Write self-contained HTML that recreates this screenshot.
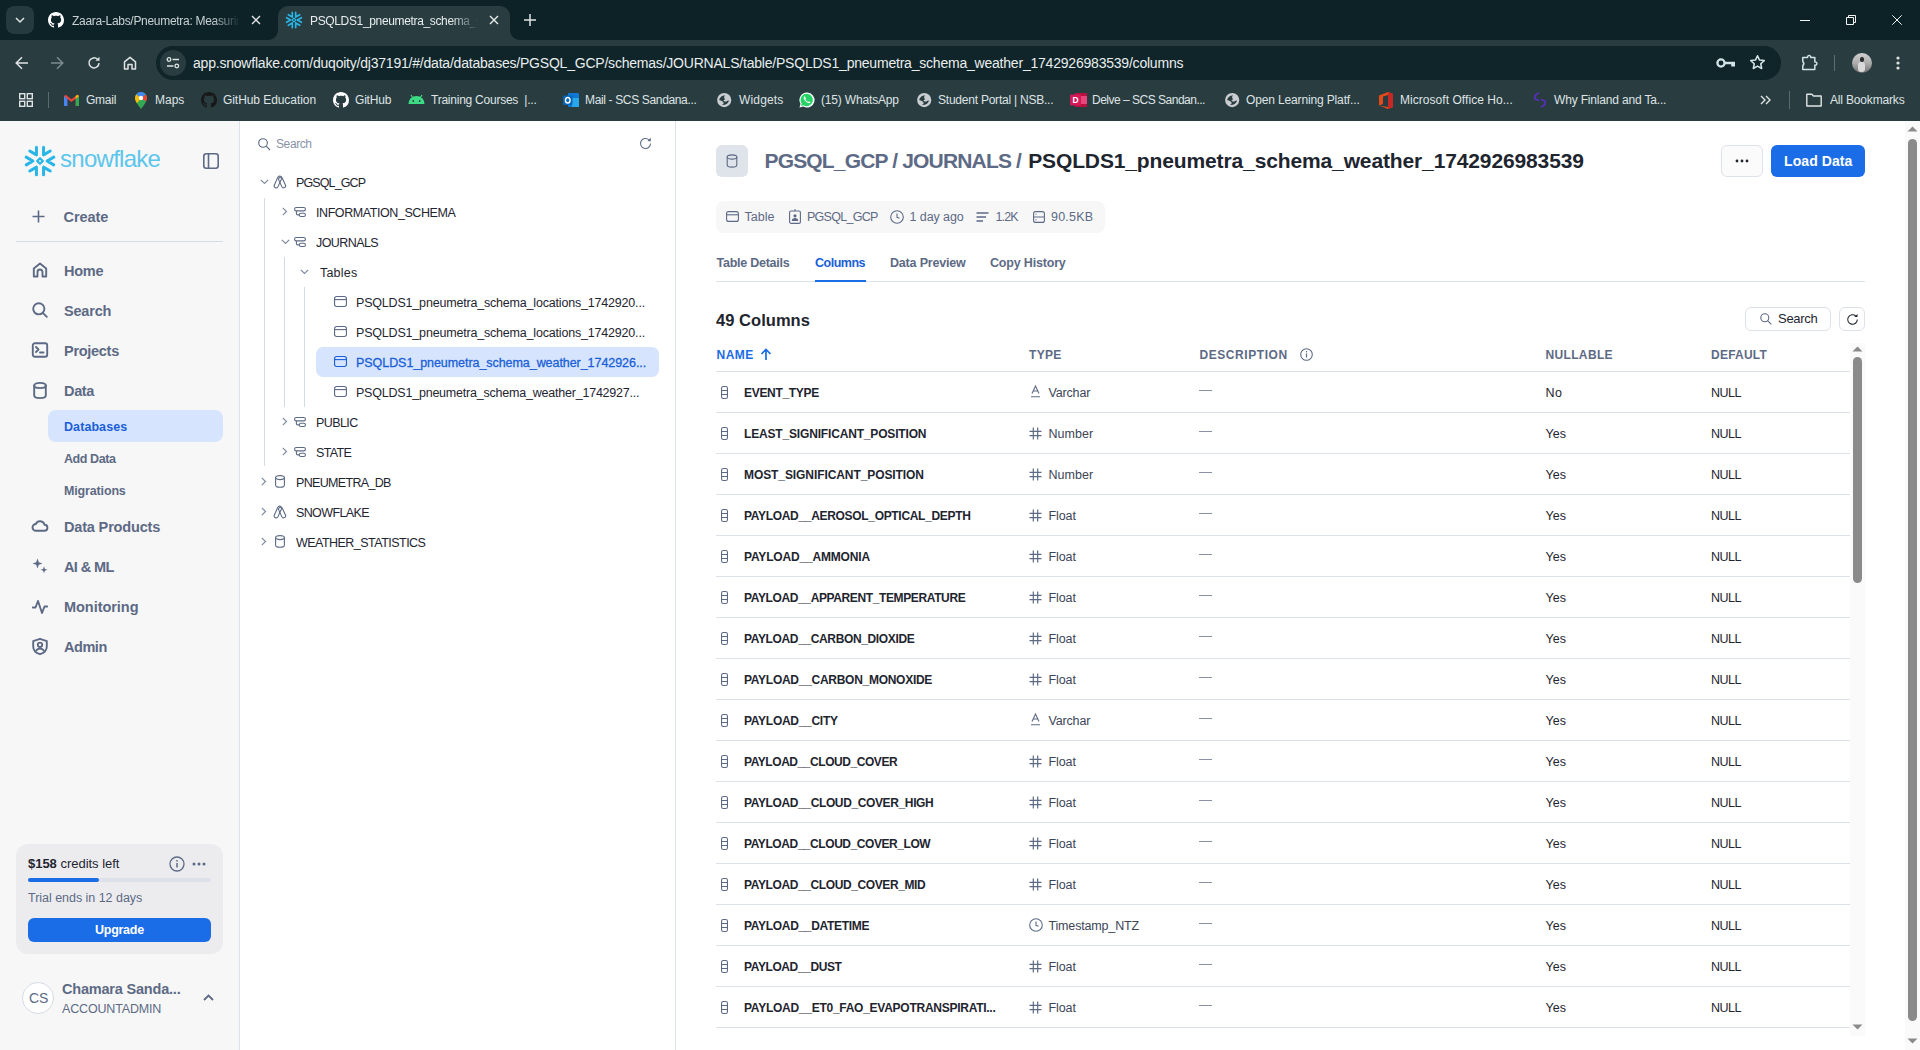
<!DOCTYPE html>
<html><head><meta charset="utf-8">
<style>
*{box-sizing:border-box}
html,body{margin:0;padding:0}
body{width:1920px;height:1050px;overflow:hidden;position:relative;font-family:"Liberation Sans",sans-serif;background:#fff}
.a{position:absolute;white-space:nowrap}
svg{position:absolute;overflow:visible}
</style></head><body>
<div class="a" style="left:0px;top:0px;width:1920px;height:40px;background:#0c2227;border-radius:0px;"></div>
<div class="a" style="left:6px;top:6px;width:28px;height:28px;background:#243a3f;border-radius:8px;"></div>
<svg style="left:14px;top:15px;" width="12" height="10" viewBox="0 0 12 10"><path d="M2 3 L6 7 L10 3" stroke="#dfe3e4" stroke-width="1.5" fill="none"/></svg>
<svg style="left:48px;top:12px;" width="16" height="16" viewBox="0 0 16 16"><path fill="#fff" d="M8 0C3.58 0 0 3.58 0 8c0 3.54 2.29 6.53 5.47 7.59.4.07.55-.17.55-.38 0-.19-.01-.82-.01-1.49-2.01.37-2.530-.49-2.69-.94-.09-.23-.48-.94-.82-1.13-.28-.15-.68-.52-.01-.53.63-.01 1.08.58 1.23.82.72 1.21 1.87.87 2.33.66.07-.52.28-.87.51-1.07-1.780-.2-3.64-.89-3.64-3.95 0-.87.31-1.59.82-2.15-.08-.2-.36-1.02.08-2.12 0 0 .67-.21 2.2.82.64-.18 1.32-.27 2-.27.68 0 1.36.09 2 .27 1.53-1.04 2.2-.82 2.2-.82.44 1.1.16 1.92.08 2.12.51.56.82 1.27.82 2.15 0 3.07-1.87 3.75-3.65 3.95.29.25.54.73.54 1.48 0 1.07-.01 1.930-.01 2.2 0 .21.15.46.55.38A8.013 8.013 0 0016 8c0-4.42-3.58-8-8-8z"/></svg>
<div class="a" style="left:72px;top:13.00px;font-size:12px;line-height:16px;color:#c9d1d3;font-weight:normal;letter-spacing:0.000px;letter-spacing:-0.3px;width:168px;overflow:hidden;-webkit-mask-image:linear-gradient(90deg,#000 84%,transparent 100%)">Zaara-Labs/Pneumetra: Measuring</div>
<svg style="left:251px;top:15px;" width="10" height="10" viewBox="0 0 10 10"><path d="M1 1L9 9M9 1L1 9" stroke="#dfe3e4" stroke-width="1.4"/></svg>
<div class="a" style="left:278px;top:6px;width:232px;height:34px;background:#293d41;border-radius:10px 10px 0 0px;"></div>
<div class="a" style="left:268px;top:30px;width:10px;height:10px;background:radial-gradient(circle at 0 0,#0c2227 9.5px,#293d41 10.5px)"></div>
<div class="a" style="left:510px;top:30px;width:10px;height:10px;background:radial-gradient(circle at 100% 0,#0c2227 9.5px,#293d41 10.5px)"></div>
<svg style="left:286px;top:12px;" width="16" height="16" viewBox="-8 -8 16 16"><path d="M3.40 -0.00L7.38 -2.30M3.40 -0.00L7.38 2.30M1.70 -2.94L1.70 -7.54M1.70 -2.94L5.68 -5.24M-1.70 -2.94L-5.68 -5.24M-1.70 -2.94L-1.70 -7.54M-3.40 -0.00L-7.38 2.30M-3.40 -0.00L-7.38 -2.30M-1.70 2.94L-1.70 7.54M-1.70 2.94L-5.68 5.24M1.70 2.94L5.68 5.24M1.70 2.94L1.70 7.54" stroke="#29b5e8" stroke-width="1.7" stroke-linecap="round" fill="none"/><path d="M0 -1.9L1.9 0L0 1.9L-1.9 0Z" stroke="#29b5e8" stroke-width="1.2" stroke-linejoin="round" fill="none"/></svg>
<div class="a" style="left:310px;top:13.00px;font-size:12px;line-height:16px;color:#e8ecec;font-weight:normal;letter-spacing:0.000px;letter-spacing:-0.35px;width:168px;overflow:hidden;-webkit-mask-image:linear-gradient(90deg,#000 84%,transparent 100%)">PSQLDS1_pneumetra_schema_weather</div>
<svg style="left:489px;top:15px;" width="10" height="10" viewBox="0 0 10 10"><path d="M1 1L9 9M9 1L1 9" stroke="#e8ecec" stroke-width="1.4"/></svg>
<svg style="left:524px;top:14px;" width="12" height="12" viewBox="0 0 12 12"><path d="M6 0V12M0 6H12" stroke="#dfe3e4" stroke-width="1.5"/></svg>
<div class="a" style="left:1800px;top:20px;width:10px;height:1px;background:#f2f4f4;border-radius:0px;"></div>
<svg style="left:1846px;top:15px;" width="10" height="10" viewBox="0 0 10 10"><path d="M0.5 2.5H7.5V9.5H0.5Z M2.5 2.5V0.5H9.5V7.5H7.5" stroke="#f2f4f4" stroke-width="1" fill="none"/></svg>
<svg style="left:1892px;top:15px;" width="10" height="10" viewBox="0 0 10 10"><path d="M0.3 0.3L9.7 9.7M9.7 0.3L0.3 9.7" stroke="#f2f4f4" stroke-width="1"/></svg>
<div class="a" style="left:0px;top:40px;width:1920px;height:81px;background:#293d41;border-radius:0px;"></div>
<svg style="left:15px;top:56px;" width="14" height="14" viewBox="0 0 14 14"><path d="M13 7H1.5M7 1.2L1.2 7L7 12.8" stroke="#dfe3e4" stroke-width="1.5" fill="none"/></svg>
<svg style="left:50px;top:56px;" width="14" height="14" viewBox="0 0 14 14"><path d="M1 7H12.5M7 1.2L12.8 7L7 12.8" stroke="#7d8b8e" stroke-width="1.5" fill="none"/></svg>
<svg style="left:87px;top:56px;" width="14" height="14" viewBox="0 0 14 14"><path d="M12 7A5 5 0 1 1 10.5 3.3" stroke="#dfe3e4" stroke-width="1.5" fill="none"/><path d="M12.5 0.8V4.8H8.5Z" fill="#dfe3e4"/></svg>
<svg style="left:123px;top:56px;" width="14" height="14" viewBox="0 0 14 14"><path d="M1.5 13V5.8L7 1.3L12.5 5.8V13H9V8.5H5V13Z" stroke="#dfe3e4" stroke-width="1.5" fill="none" stroke-linejoin="round"/></svg>
<div class="a" style="left:156px;top:46px;width:1625px;height:34px;background:#0f2529;border-radius:17px;"></div>
<div class="a" style="left:160px;top:50px;width:26px;height:26px;background:#293d41;border-radius:13px;"></div>
<svg style="left:166px;top:56px;" width="14" height="14" viewBox="0 0 14 14"><circle cx="3" cy="3.5" r="1.8" stroke="#dfe3e4" stroke-width="1.3" fill="none"/><path d="M6.5 3.5H13M1 10H7.5" stroke="#dfe3e4" stroke-width="1.3"/><circle cx="10.8" cy="10" r="1.8" stroke="#dfe3e4" stroke-width="1.3" fill="none"/></svg>
<div class="a" id="url" style="left:193px;top:54.00px;font-size:14px;line-height:18px;color:#e9edee;font-weight:normal;letter-spacing:-0.212px;">app.snowflake.com/duqoity/dj37191/#/data/databases/PGSQL_GCP/schemas/JOURNALS/table/PSQLDS1_pneumetra_schema_weather_1742926983539/columns</div>
<svg style="left:1716px;top:56px;" width="20" height="14" viewBox="0 0 20 14"><circle cx="5" cy="7" r="3.6" stroke="#d3e4e6" stroke-width="2.3" fill="none"/><path d="M8.6 5.8H19V8.2H8.6Z M15.2 8H19V10.5H15.2Z" fill="#d3e4e6"/></svg>
<svg style="left:1749px;top:54px;" width="17" height="17" viewBox="0 0 24 24"><path d="M12 2.5L14.9 8.6L21.5 9.3L16.6 13.8L17.9 20.4L12 17.1L6.1 20.4L7.4 13.8L2.5 9.3L9.1 8.6Z" stroke="#d3e4e6" stroke-width="2.2" fill="none" stroke-linejoin="round"/></svg>
<svg style="left:1801px;top:54px;" width="17" height="17" viewBox="0 0 24 24"><path d="M2.5 5H9.3A2.3 2.3 0 1 1 13.7 5H19.5V11.3A2.3 2.3 0 1 1 19.5 15.7V22H2.5V16.5Q5.5 13.5 2.5 10.5Z" stroke="#d3e4e6" stroke-width="2.1" fill="none" stroke-linejoin="round"/></svg>
<div class="a" style="left:1834px;top:55px;width:1px;height:16px;background:#5b6e71;border-radius:0px;"></div>
<div class="a" style="left:1852px;top:53px;width:20px;height:20px;background:linear-gradient(180deg,#d0d0d0 0%,#a9a9a9 55%,#6f6f6f 100%);border-radius:10px;"></div>
<div class="a" style="left:1860px;top:57px;width:4px;height:5px;background:#2a2a2a;border-radius:2px;"></div>
<div class="a" style="left:1858px;top:62px;width:7px;height:10px;background:#d9d9d9;border-radius:3px;"></div>
<svg style="left:1896px;top:56px;" width="4" height="14" viewBox="0 0 4 14"><circle cx="2" cy="2" r="1.6" fill="#dfe3e4"/><circle cx="2" cy="7" r="1.6" fill="#dfe3e4"/><circle cx="2" cy="12" r="1.6" fill="#dfe3e4"/></svg>
<svg style="left:19px;top:93px;" width="14" height="14" viewBox="0 0 14 14"><rect x="0.7" y="0.7" width="5" height="5" stroke="#dfe3e4" stroke-width="1.4" fill="none"/><rect x="0.7" y="8.3" width="5" height="5" stroke="#dfe3e4" stroke-width="1.4" fill="none"/><rect x="8.3" y="0.7" width="5" height="5" stroke="#dfe3e4" stroke-width="1.4" fill="none"/><rect x="8.3" y="8.3" width="5" height="5" stroke="#dfe3e4" stroke-width="1.4" fill="none"/></svg>
<div class="a" style="left:48px;top:92px;width:1px;height:16px;background:#5b6a6d;border-radius:0px;"></div>
<svg style="left:64px;top:94px;" width="15" height="12" viewBox="0 0 15 12"><path d="M0 2V12H3.3V4.8L7.5 8L11.7 4.8V12H15V2L13.3 0.8L7.5 5.2L1.7 0.8Z" fill="#ea4335"/><path d="M0 2V12H3.3V4.8Z" fill="#4285f4"/><path d="M15 2V12H11.7V4.8Z" fill="#34a853"/><path d="M11.7 4.8L15 2L13.3 0.8L11.7 2Z" fill="#fbbc04"/></svg>
<svg style="left:135px;top:92px;" width="12" height="17" viewBox="0 0 12 17"><path d="M6 0A6 6 0 0 0 0 6C0 10 6 17 6 17S12 10 12 6A6 6 0 0 0 6 0Z" fill="#34a853"/><path d="M6 0A6 6 0 0 0 1.2 2.4L6 6 10.8 2.4A6 6 0 0 0 6 0Z" fill="#4285f4"/><path d="M0 6C0 7.5 .8 9.5 2 11.3L6 6 1.2 2.4A6 6 0 0 0 0 6Z" fill="#fbbc04"/><path d="M6 6 10.8 2.4C11.6 3.4 12 4.6 12 6 12 7 11.6 8.2 11 9.5Z" fill="#ea4335"/><circle cx="6" cy="6" r="2.2" fill="#fff"/></svg>
<svg style="left:201px;top:92px;" width="16" height="16" viewBox="0 0 16 16"><path fill="#181818" d="M8 0C3.58 0 0 3.58 0 8c0 3.54 2.29 6.53 5.47 7.59.4.07.55-.17.55-.38 0-.19-.01-.82-.01-1.49-2.01.37-2.530-.49-2.69-.94-.09-.23-.48-.94-.82-1.13-.28-.15-.68-.52-.01-.53.63-.01 1.08.58 1.23.82.72 1.21 1.87.87 2.33.66.07-.52.28-.87.51-1.07-1.780-.2-3.64-.89-3.64-3.95 0-.87.31-1.59.82-2.15-.08-.2-.36-1.02.08-2.12 0 0 .67-.21 2.2.82.64-.18 1.32-.27 2-.27.68 0 1.36.09 2 .27 1.53-1.04 2.2-.82 2.2-.82.44 1.1.16 1.92.08 2.12.51.56.82 1.27.82 2.15 0 3.07-1.87 3.75-3.65 3.95.29.25.54.73.54 1.48 0 1.07-.01 1.930-.01 2.2 0 .21.15.46.55.38A8.013 8.013 0 0016 8c0-4.42-3.58-8-8-8z"/></svg>
<svg style="left:333px;top:92px;" width="16" height="16" viewBox="0 0 16 16"><path fill="#fff" d="M8 0C3.58 0 0 3.58 0 8c0 3.54 2.29 6.53 5.47 7.59.4.07.55-.17.55-.38 0-.19-.01-.82-.01-1.49-2.01.37-2.530-.49-2.69-.94-.09-.23-.48-.94-.82-1.13-.28-.15-.68-.52-.01-.53.63-.01 1.08.58 1.23.82.72 1.21 1.87.87 2.33.66.07-.52.28-.87.51-1.07-1.780-.2-3.64-.89-3.64-3.95 0-.87.31-1.59.82-2.15-.08-.2-.36-1.02.08-2.12 0 0 .67-.21 2.2.82.64-.18 1.32-.27 2-.27.68 0 1.36.09 2 .27 1.53-1.04 2.2-.82 2.2-.82.44 1.1.16 1.92.08 2.12.51.56.82 1.27.82 2.15 0 3.07-1.87 3.75-3.65 3.95.29.25.54.73.54 1.48 0 1.07-.01 1.930-.01 2.2 0 .21.15.46.55.38A8.013 8.013 0 0016 8c0-4.42-3.58-8-8-8z"/></svg>
<svg style="left:408px;top:94px;" width="17" height="10" viewBox="0 0 17 10"><path d="M0.5 10A8 8 0 0 1 16.5 10Z" fill="#3ddc84"/><path d="M3 1L5 4M14 1L12 4" stroke="#3ddc84" stroke-width="1.2"/><circle cx="5.3" cy="7" r="0.9" fill="#293d41"/><circle cx="11.7" cy="7" r="0.9" fill="#293d41"/></svg>
<svg style="left:563px;top:92px;" width="16" height="16" viewBox="0 0 16 16"><rect x="5" y="1" width="11" height="14" rx="1" fill="#0f78d4"/><rect x="9" y="6" width="7" height="9" fill="#28a8ea"/><rect x="0" y="3.5" width="9.5" height="9.5" rx="1" fill="#0364b8"/><ellipse cx="4.75" cy="8.25" rx="2.3" ry="2.8" stroke="#fff" stroke-width="1.4" fill="none"/></svg>
<svg style="left:717px;top:93px;" width="15" height="15" viewBox="0 0 15 15"><circle cx="7.2" cy="7.1" r="7.1" fill="#c9ccd0"/><path d="M2.2 6.9C2.6 4.6 4.8 2.4 8 2.3C7.3 3.4 6.6 4.6 7.6 5.5C8.3 6.2 7.4 7.2 6.1 7.5C7.2 8.4 8.2 8.9 9.2 8.5C10.2 8 11.1 7.6 12 7.5C11.5 10.2 9 12.1 5.2 12C6 11.1 7.1 10.4 6.6 9.5C5.8 8.4 4.2 7.4 2.2 6.9Z" fill="#293d41"/></svg>
<svg style="left:917px;top:93px;" width="15" height="15" viewBox="0 0 15 15"><circle cx="7.2" cy="7.1" r="7.1" fill="#c9ccd0"/><path d="M2.2 6.9C2.6 4.6 4.8 2.4 8 2.3C7.3 3.4 6.6 4.6 7.6 5.5C8.3 6.2 7.4 7.2 6.1 7.5C7.2 8.4 8.2 8.9 9.2 8.5C10.2 8 11.1 7.6 12 7.5C11.5 10.2 9 12.1 5.2 12C6 11.1 7.1 10.4 6.6 9.5C5.8 8.4 4.2 7.4 2.2 6.9Z" fill="#293d41"/></svg>
<svg style="left:1225px;top:93px;" width="15" height="15" viewBox="0 0 15 15"><circle cx="7.2" cy="7.1" r="7.1" fill="#c9ccd0"/><path d="M2.2 6.9C2.6 4.6 4.8 2.4 8 2.3C7.3 3.4 6.6 4.6 7.6 5.5C8.3 6.2 7.4 7.2 6.1 7.5C7.2 8.4 8.2 8.9 9.2 8.5C10.2 8 11.1 7.6 12 7.5C11.5 10.2 9 12.1 5.2 12C6 11.1 7.1 10.4 6.6 9.5C5.8 8.4 4.2 7.4 2.2 6.9Z" fill="#293d41"/></svg>
<svg style="left:799px;top:92px;" width="16" height="16" viewBox="0 0 16 16"><path d="M8 0.5A7.5 7.5 0 0 0 1.5 11.8L0.5 15.5L4.3 14.5A7.5 7.5 0 1 0 8 0.5Z" fill="#fff"/><path d="M8 1.8A6.2 6.2 0 0 0 2.7 11.5L2 14L4.5 13.3A6.2 6.2 0 1 0 8 1.8Z" fill="#25d366"/><path d="M5.5 4.3C5 4.6 4.6 5.3 4.9 6.4 5.4 8.3 7.3 10.6 9.8 11.1 10.7 11.3 11.4 10.8 11.5 10.2L10 9.3 9.3 10C8.3 9.7 6.8 8.3 6.3 7.3L6.9 6.5 6 4.4Z" fill="#fff"/></svg>
<svg style="left:1070px;top:92px;" width="17" height="16" viewBox="0 0 17 16"><rect x="5" y="1" width="12" height="14" fill="#b9113d"/><rect x="11" y="4" width="6" height="8" fill="#e8467c"/><rect x="0" y="2.5" width="11" height="11" rx="1" fill="#d3195a"/><text x="5.5" y="11.3" font-size="8.5" font-weight="bold" fill="#fff" text-anchor="middle" font-family="Liberation Sans">D</text></svg>
<svg style="left:1379px;top:92px;" width="14" height="17" viewBox="0 0 14 17"><path d="M0 3.5L9 0L14 2V15L9 17L0 13.5L9 15V3L4 4.5V12L0 13.5Z" fill="#e64a19"/><path d="M9 0L14 2V15L9 17Z" fill="#c62828"/></svg>
<svg style="left:1533px;top:92px;" width="14" height="16" viewBox="0 0 14 16"><path d="M6 1C3 2 1 4 2 7L6 8.5M8 15C11 14 13 12 12 9L8 7.5" stroke="#5a2fc2" stroke-width="1.6" fill="none"/></svg>
<svg style="left:1760px;top:95px;" width="11" height="10" viewBox="0 0 11 10"><path d="M1 1L5 5L1 9M6 1L10 5L6 9" stroke="#dfe3e4" stroke-width="1.4" fill="none"/></svg>
<div class="a" style="left:1789px;top:91px;width:1px;height:18px;background:#5b6a6d;border-radius:0px;"></div>
<svg style="left:1806px;top:93px;" width="16" height="14" viewBox="0 0 16 14"><path d="M0.8 1.2H5.8L7.5 3H15.2V13H0.8Z" stroke="#dfe3e4" stroke-width="1.4" fill="none" stroke-linejoin="round"/></svg>
<div class="a" id="bm86" style="left:86px;top:92.00px;font-size:12px;line-height:16px;color:#dfe3e4;font-weight:normal;letter-spacing:-0.250px;">Gmail</div>
<div class="a" id="bm155" style="left:155px;top:92.00px;font-size:12px;line-height:16px;color:#dfe3e4;font-weight:normal;letter-spacing:0.000px;">Maps</div>
<div class="a" id="bm223" style="left:223px;top:92.00px;font-size:12px;line-height:16px;color:#dfe3e4;font-weight:normal;letter-spacing:-0.067px;">GitHub Education</div>
<div class="a" id="bm355" style="left:355px;top:92.00px;font-size:12px;line-height:16px;color:#dfe3e4;font-weight:normal;letter-spacing:-0.200px;">GitHub</div>
<div class="a" id="bm431" style="left:431px;top:92.00px;font-size:12px;line-height:16px;color:#dfe3e4;font-weight:normal;letter-spacing:-0.238px;">Training Courses  |...</div>
<div class="a" id="bm585" style="left:585px;top:92.00px;font-size:12px;line-height:16px;color:#dfe3e4;font-weight:normal;letter-spacing:-0.350px;">Mail - SCS Sandana...</div>
<div class="a" id="bm739" style="left:739px;top:92.00px;font-size:12px;line-height:16px;color:#dfe3e4;font-weight:normal;letter-spacing:0.167px;">Widgets</div>
<div class="a" id="bm821" style="left:821px;top:92.00px;font-size:12px;line-height:16px;color:#dfe3e4;font-weight:normal;letter-spacing:-0.167px;">(15) WhatsApp</div>
<div class="a" id="bm938" style="left:938px;top:92.00px;font-size:12px;line-height:16px;color:#dfe3e4;font-weight:normal;letter-spacing:-0.227px;">Student Portal | NSB...</div>
<div class="a" id="bm1092" style="left:1092px;top:92.00px;font-size:12px;line-height:16px;color:#dfe3e4;font-weight:normal;letter-spacing:-0.500px;">Delve – SCS Sandan...</div>
<div class="a" id="bm1246" style="left:1246px;top:92.00px;font-size:12px;line-height:16px;color:#dfe3e4;font-weight:normal;letter-spacing:-0.143px;">Open Learning Platf...</div>
<div class="a" id="bm1400" style="left:1400px;top:92.00px;font-size:12px;line-height:16px;color:#dfe3e4;font-weight:normal;letter-spacing:0.048px;">Microsoft Office Ho...</div>
<div class="a" id="bm1554" style="left:1554px;top:92.00px;font-size:12px;line-height:16px;color:#dfe3e4;font-weight:normal;letter-spacing:-0.170px;">Why Finland and Ta...</div>
<div class="a" id="bm1830" style="left:1830px;top:92.00px;font-size:12px;line-height:16px;color:#dfe3e4;font-weight:normal;letter-spacing:-0.167px;">All Bookmarks</div>
<div class="a" style="left:0px;top:121px;width:240px;height:929px;background:#f7f7f7;border-radius:0px;"></div>
<div class="a" style="left:239px;top:121px;width:1px;height:929px;background:#dde1ea;border-radius:0px;"></div>
<svg style="left:40px;top:161px;" width="1" height="1" viewBox="0 0 1 1"><path d="M7.10 -0.00L13.77 -3.85M7.10 -0.00L13.77 3.85M3.55 -6.15L3.55 -13.85M3.55 -6.15L10.22 -10.00M-3.55 -6.15L-10.22 -10.00M-3.55 -6.15L-3.55 -13.85M-7.10 -0.00L-13.77 3.85M-7.10 -0.00L-13.77 -3.85M-3.55 6.15L-3.55 13.85M-3.55 6.15L-10.22 10.00M3.55 6.15L10.22 10.00M3.55 6.15L3.55 13.85" stroke="#29b5e8" stroke-width="3.0" stroke-linecap="round" fill="none"/><path d="M0 -2.8L2.8 0L0 2.8L-2.8 0Z" stroke="#29b5e8" stroke-width="2.3" stroke-linejoin="round" fill="none"/></svg>
<div class="a" id="logo" style="left:60px;top:145.00px;font-size:24px;line-height:28px;color:#5cc5ec;font-weight:normal;letter-spacing:-0.725px;">snowflake</div>
<svg style="left:203px;top:153px;" width="16" height="16" viewBox="0 0 16 16"><rect x="0.8" y="0.8" width="14.4" height="14.4" rx="2.5" stroke="#5d6a85" stroke-width="1.6" fill="none"/><path d="M5.5 1V15" stroke="#5d6a85" stroke-width="1.6"/></svg>
<svg style="left:32px;top:210px;" width="13" height="13" viewBox="0 0 13 13"><path d="M6.5 0.5V12.5M0.5 6.5H12.5" stroke="#5d6a85" stroke-width="1.6"/></svg>
<div class="a" id="nav217" style="left:63.5px;top:208.00px;font-size:14.5px;line-height:18px;color:#5d6a85;font-weight:bold;letter-spacing:-0.040px;">Create</div>
<div class="a" id="nav271" style="left:64px;top:262.00px;font-size:14.5px;line-height:18px;color:#5d6a85;font-weight:bold;letter-spacing:-0.268px;">Home</div>
<div class="a" id="nav311" style="left:64px;top:302.00px;font-size:14.5px;line-height:18px;color:#5d6a85;font-weight:bold;letter-spacing:-0.200px;">Search</div>
<div class="a" id="nav351" style="left:64px;top:342.00px;font-size:14.5px;line-height:18px;color:#5d6a85;font-weight:bold;letter-spacing:-0.286px;">Projects</div>
<div class="a" id="nav391" style="left:64px;top:382.00px;font-size:14.5px;line-height:18px;color:#5d6a85;font-weight:bold;letter-spacing:-0.333px;">Data</div>
<div class="a" id="nav527" style="left:64px;top:518.00px;font-size:14.5px;line-height:18px;color:#5d6a85;font-weight:bold;letter-spacing:-0.167px;">Data Products</div>
<div class="a" id="nav567" style="left:64px;top:558.00px;font-size:14.5px;line-height:18px;color:#5d6a85;font-weight:bold;letter-spacing:-0.600px;">AI &amp; ML</div>
<div class="a" id="nav607" style="left:64px;top:598.00px;font-size:14.5px;line-height:18px;color:#5d6a85;font-weight:bold;letter-spacing:-0.042px;">Monitoring</div>
<div class="a" id="nav647" style="left:64px;top:638.00px;font-size:14.5px;line-height:18px;color:#5d6a85;font-weight:bold;letter-spacing:-0.450px;">Admin</div>
<div class="a" style="left:16px;top:241px;width:207px;height:1px;background:#d5dbe6;border-radius:0px;"></div>
<svg style="left:32px;top:262px;" width="16" height="16" viewBox="0 0 16 16"><path d="M1.8 14.5V6.5L8 1.5L14.2 6.5V14.5H10.5V10A2.5 2.5 0 0 0 5.5 10V14.5Z" stroke="#5d6a85" fill="none" stroke-width="1.9" stroke-linecap="round" stroke-linejoin="round"/></svg>
<svg style="left:32px;top:302px;" width="16" height="16" viewBox="0 0 16 16"><circle cx="6.8" cy="6.8" r="5.6" stroke="#5d6a85" fill="none" stroke-width="1.9" stroke-linecap="round" stroke-linejoin="round"/><path d="M10.8 10.8L14.8 14.8" stroke="#5d6a85" fill="none" stroke-width="1.9" stroke-linecap="round" stroke-linejoin="round"/></svg>
<svg style="left:32px;top:342px;" width="16" height="16" viewBox="0 0 16 16"><rect x="0.8" y="1.3" width="14.4" height="13.4" rx="2" stroke="#5d6a85" fill="none" stroke-width="1.9" stroke-linecap="round" stroke-linejoin="round"/><path d="M4 5L6.5 7.5L4 10M8 10.5H11.5" stroke="#5d6a85" fill="none" stroke-width="1.9" stroke-linecap="round" stroke-linejoin="round"/></svg>
<svg style="left:33px;top:382px;" width="14" height="17" viewBox="0 0 14 17"><ellipse cx="7" cy="3.5" rx="5.8" ry="2.6" stroke="#5d6a85" fill="none" stroke-width="1.9" stroke-linecap="round" stroke-linejoin="round"/><path d="M1.2 3.5V13.5A5.8 2.6 0 0 0 12.8 13.5V3.5" stroke="#5d6a85" fill="none" stroke-width="1.9" stroke-linecap="round" stroke-linejoin="round"/></svg>
<div class="a" style="left:48px;top:410px;width:175px;height:32px;background:#d6e5fd;border-radius:8px;"></div>
<div class="a" id="sub1" style="left:64px;top:418.50px;font-size:12.5px;line-height:16px;color:#1a5fd8;font-weight:bold;letter-spacing:0.079px;">Databases</div>
<div class="a" id="sub2" style="left:64px;top:450.50px;font-size:12.5px;line-height:16px;color:#5d6a85;font-weight:bold;letter-spacing:-0.429px;">Add Data</div>
<div class="a" id="sub3" style="left:64px;top:482.50px;font-size:12.5px;line-height:16px;color:#5d6a85;font-weight:bold;letter-spacing:-0.153px;">Migrations</div>
<svg style="left:32px;top:519px;" width="16" height="13" viewBox="0 0 16 13"><path d="M4 11.8H12.3A3 3 0 0 0 12.5 5.8A4.6 4.6 0 0 0 3.8 5A3.4 3.4 0 0 0 4 11.8Z" stroke="#5d6a85" fill="none" stroke-width="1.9" stroke-linecap="round" stroke-linejoin="round"/></svg>
<svg style="left:32px;top:558px;" width="16" height="16" viewBox="0 0 16 16"><path d="M5.5 0.5L6.8 4.2L10.5 5.5L6.8 6.8L5.5 10.5L4.2 6.8L0.5 5.5L4.2 4.2Z" fill="#5d6a85"/><path d="M12 8.3L12.9 10.9L15.5 11.8L12.9 12.7L12 15.3L11.1 12.7L8.5 11.8L11.1 10.9Z" fill="#5d6a85"/></svg>
<svg style="left:32px;top:599px;" width="16" height="16" viewBox="0 0 16 16"><path d="M0.8 8.5H3.5L6 2L10 14L12.5 7.5H15.2" stroke="#5d6a85" fill="none" stroke-width="1.9" stroke-linecap="round" stroke-linejoin="round"/></svg>
<svg style="left:32px;top:638px;" width="16" height="17" viewBox="0 0 16 17"><path d="M8 0.8L14.8 3.2V8.5C14.8 12.3 11.8 15 8 16.2C4.2 15 1.2 12.3 1.2 8.5V3.2Z" stroke="#5d6a85" fill="none" stroke-width="1.9" stroke-linecap="round" stroke-linejoin="round"/><circle cx="8" cy="6.8" r="2.2" stroke="#5d6a85" fill="none" stroke-width="1.9" stroke-linecap="round" stroke-linejoin="round"/><path d="M4.2 12.6A4.5 4.5 0 0 1 11.8 12.6" stroke="#5d6a85" fill="none" stroke-width="1.9" stroke-linecap="round" stroke-linejoin="round"/></svg>
<div class="a" style="left:16px;top:844px;width:207px;height:110px;background:#ececef;border-radius:12px;"></div>
<div class="a" id="cred" style="left:28px;top:855.50px;font-size:13px;line-height:16px;color:#1e252f;font-weight:normal;letter-spacing:-0.022px;"><b>$158</b> credits left</div>
<svg style="left:169px;top:856px;" width="16" height="16" viewBox="0 0 16 16"><circle cx="8" cy="8" r="7" stroke="#5d6a85" stroke-width="1.3" fill="none"/><path d="M8 7V11.5" stroke="#5d6a85" stroke-width="1.5"/><circle cx="8" cy="4.8" r="0.9" fill="#5d6a85"/></svg>
<svg style="left:192px;top:862px;" width="14" height="4" viewBox="0 0 14 4"><circle cx="2" cy="2" r="1.5" fill="#5d6a85"/><circle cx="7" cy="2" r="1.5" fill="#5d6a85"/><circle cx="12" cy="2" r="1.5" fill="#5d6a85"/></svg>
<div class="a" style="left:28px;top:878px;width:183px;height:4px;background:#dde1e9;border-radius:2px;"></div>
<div class="a" style="left:28px;top:878px;width:71px;height:4px;background:#1a6ce7;border-radius:2px;"></div>
<div class="a" id="trial" style="left:28px;top:889.50px;font-size:12.5px;line-height:16px;color:#5d6a85;font-weight:normal;letter-spacing:-0.030px;">Trial ends in 12 days</div>
<div class="a" style="left:28px;top:918px;width:183px;height:24px;background:#1a6ce7;border-radius:6px;"></div>
<div class="a" id="upg" style="left:95px;top:922.00px;font-size:12.5px;line-height:16px;color:#fff;font-weight:bold;letter-spacing:-0.266px;">Upgrade</div>
<div class="a" style="left:22px;top:982px;width:32px;height:32px;border-radius:16px;background:#fff;border:1px solid #d5dbe6"></div>
<div class="a" id="cs" style="left:29px;top:990.00px;font-size:14px;line-height:16px;color:#5d6a85;font-weight:normal;letter-spacing:0.000px;">CS</div>
<div class="a" id="cham" style="left:62px;top:980.50px;font-size:14.5px;line-height:17px;color:#5d6a85;font-weight:bold;letter-spacing:-0.200px;">Chamara Sanda...</div>
<div class="a" id="acct" style="left:62px;top:1002.00px;font-size:12.5px;line-height:15px;color:#5d6a85;font-weight:normal;letter-spacing:-0.166px;">ACCOUNTADMIN</div>
<svg style="left:203px;top:994px;" width="11" height="7" viewBox="0 0 11 7"><path d="M1 6L5.5 1.5L10 6" stroke="#5d6a85" stroke-width="1.8" fill="none"/></svg>
<div class="a" style="left:675px;top:121px;width:1px;height:929px;background:#dde1ea;border-radius:0px;"></div>
<svg style="left:258px;top:138px;" width="13" height="13" viewBox="0 0 13 13"><circle cx="5" cy="5" r="4.3" stroke="#5d6a85" stroke-width="1.1" fill="none"/><path d="M8.2 8.2L12 12" stroke="#5d6a85" stroke-width="1.1"/></svg>
<div class="a" id="tsearch" style="left:276px;top:136.00px;font-size:12px;line-height:16px;color:#8a93a6;font-weight:normal;letter-spacing:-0.400px;">Search</div>
<svg style="left:639px;top:137px;" width="13" height="13" viewBox="0 0 13 13"><path d="M11.5 6.5A5 5 0 1 1 10 2.9" stroke="#5d6a85" stroke-width="1.1" fill="none"/><path d="M11.8 0.8V4.2H8.4Z" fill="#5d6a85"/></svg>
<div class="a" style="left:264px;top:198px;width:1px;height:268px;background:#d5dbe6;border-radius:0px;"></div>
<div class="a" style="left:284px;top:257px;width:1px;height:150px;background:#d5dbe6;border-radius:0px;"></div>
<div class="a" style="left:304px;top:287px;width:1px;height:120px;background:#d5dbe6;border-radius:0px;"></div>
<svg style="left:260px;top:179px;" width="9" height="6" viewBox="0 0 9 6"><path d="M0.8 0.8L4.5 4.5L8.2 0.8" stroke="#7f8aa1" stroke-width="1.2" fill="none"/></svg>
<svg style="left:273px;top:176px;" width="14" height="13" viewBox="0 0 14 13"><path d="M5.03 10.62L8.43 3.02A2.0 2.0 0 0 0 4.77 1.38L1.37 8.98A2.0 2.0 0 0 0 5.03 10.62Z" stroke="#5d6a85" stroke-width="1.1" fill="none"/><path d="M5.78 4.14L8.78 10.64A2.0 2.0 0 0 0 12.42 8.96L9.42 2.46A2.0 2.0 0 0 0 5.78 4.14Z" stroke="#5d6a85" stroke-width="1.1" fill="none"/></svg>
<div class="a" id="tree0" style="left:296px;top:174.80px;font-size:12.5px;line-height:16px;color:#1e252f;font-weight:normal;letter-spacing:-0.875px;">PGSQL_GCP</div>
<svg style="left:281.5px;top:207px;" width="6" height="9" viewBox="0 0 6 9"><path d="M0.8 0.8L4.5 4.5L0.8 8.2" stroke="#7f8aa1" stroke-width="1.2" fill="none"/></svg>
<svg style="left:294px;top:207px;" width="12" height="10" viewBox="0 0 12 10"><rect x="0.55" y="0.55" width="10.9" height="3.3" rx="1.65" stroke="#5d6a85" stroke-width="1.1" fill="none"/><path d="M2.4 3.9V6.5Q2.4 7.9 3.7 7.9H5.3" stroke="#5d6a85" stroke-width="1.1" fill="none"/><rect x="5.3" y="6.3" width="6.15" height="3.2" rx="1.6" stroke="#5d6a85" stroke-width="1.1" fill="none"/></svg>
<div class="a" id="tree1" style="left:316px;top:204.80px;font-size:12.5px;line-height:16px;color:#1e252f;font-weight:normal;letter-spacing:-0.426px;">INFORMATION_SCHEMA</div>
<svg style="left:281px;top:239px;" width="9" height="6" viewBox="0 0 9 6"><path d="M0.8 0.8L4.5 4.5L8.2 0.8" stroke="#7f8aa1" stroke-width="1.2" fill="none"/></svg>
<svg style="left:294px;top:237px;" width="12" height="10" viewBox="0 0 12 10"><rect x="0.55" y="0.55" width="10.9" height="3.3" rx="1.65" stroke="#5d6a85" stroke-width="1.1" fill="none"/><path d="M2.4 3.9V6.5Q2.4 7.9 3.7 7.9H5.3" stroke="#5d6a85" stroke-width="1.1" fill="none"/><rect x="5.3" y="6.3" width="6.15" height="3.2" rx="1.6" stroke="#5d6a85" stroke-width="1.1" fill="none"/></svg>
<div class="a" id="tree2" style="left:316px;top:235.30px;font-size:12.5px;line-height:16px;color:#1e252f;font-weight:normal;letter-spacing:-0.571px;">JOURNALS</div>
<svg style="left:300px;top:269px;" width="9" height="6" viewBox="0 0 9 6"><path d="M0.8 0.8L4.5 4.5L8.2 0.8" stroke="#7f8aa1" stroke-width="1.2" fill="none"/></svg>
<div class="a" id="tree3" style="left:320px;top:265.30px;font-size:12.5px;line-height:16px;color:#1e252f;font-weight:normal;letter-spacing:0.200px;">Tables</div>
<svg style="left:334px;top:296px;" width="13" height="11" viewBox="0 0 13 11"><rect x="0.55" y="0.55" width="11.9" height="9.9" rx="2.2" stroke="#5d6a85" stroke-width="1.1" fill="none"/><path d="M0.6 3.6H12.4" stroke="#5d6a85" stroke-width="1.1"/></svg>
<div class="a" id="tree4" style="left:356px;top:295.30px;font-size:12.5px;line-height:16px;color:#1e252f;font-weight:normal;letter-spacing:-0.188px;">PSQLDS1_pneumetra_schema_locations_1742920...</div>
<svg style="left:334px;top:326px;" width="13" height="11" viewBox="0 0 13 11"><rect x="0.55" y="0.55" width="11.9" height="9.9" rx="2.2" stroke="#5d6a85" stroke-width="1.1" fill="none"/><path d="M0.6 3.6H12.4" stroke="#5d6a85" stroke-width="1.1"/></svg>
<div class="a" id="tree5" style="left:356px;top:325.30px;font-size:12.5px;line-height:16px;color:#1e252f;font-weight:normal;letter-spacing:-0.188px;">PSQLDS1_pneumetra_schema_locations_1742920...</div>
<div class="a" style="left:316px;top:347px;width:343px;height:30px;background:#d6e5fd;border-radius:7px;"></div>
<svg style="left:334px;top:356px;" width="13" height="11" viewBox="0 0 13 11"><rect x="0.55" y="0.55" width="11.9" height="9.9" rx="2.2" stroke="#1a5fd8" stroke-width="1.1" fill="none"/><path d="M0.6 3.6H12.4" stroke="#1a5fd8" stroke-width="1.1"/></svg>
<div class="a" id="tree6" style="left:356px;top:355.30px;font-size:12.5px;line-height:16px;color:#1a5fd8;font-weight:normal;letter-spacing:-0.056px;-webkit-text-stroke:0.3px #1a5fd8;">PSQLDS1_pneumetra_schema_weather_1742926...</div>
<svg style="left:334px;top:386px;" width="13" height="11" viewBox="0 0 13 11"><rect x="0.55" y="0.55" width="11.9" height="9.9" rx="2.2" stroke="#5d6a85" stroke-width="1.1" fill="none"/><path d="M0.6 3.6H12.4" stroke="#5d6a85" stroke-width="1.1"/></svg>
<div class="a" id="tree7" style="left:356px;top:385.30px;font-size:12.5px;line-height:16px;color:#1e252f;font-weight:normal;letter-spacing:-0.214px;">PSQLDS1_pneumetra_schema_weather_1742927...</div>
<svg style="left:281.5px;top:417px;" width="6" height="9" viewBox="0 0 6 9"><path d="M0.8 0.8L4.5 4.5L0.8 8.2" stroke="#7f8aa1" stroke-width="1.2" fill="none"/></svg>
<svg style="left:294px;top:417px;" width="12" height="10" viewBox="0 0 12 10"><rect x="0.55" y="0.55" width="10.9" height="3.3" rx="1.65" stroke="#5d6a85" stroke-width="1.1" fill="none"/><path d="M2.4 3.9V6.5Q2.4 7.9 3.7 7.9H5.3" stroke="#5d6a85" stroke-width="1.1" fill="none"/><rect x="5.3" y="6.3" width="6.15" height="3.2" rx="1.6" stroke="#5d6a85" stroke-width="1.1" fill="none"/></svg>
<div class="a" id="tree8" style="left:316px;top:415.30px;font-size:12.5px;line-height:16px;color:#1e252f;font-weight:normal;letter-spacing:-0.600px;">PUBLIC</div>
<svg style="left:281.5px;top:447px;" width="6" height="9" viewBox="0 0 6 9"><path d="M0.8 0.8L4.5 4.5L0.8 8.2" stroke="#7f8aa1" stroke-width="1.2" fill="none"/></svg>
<svg style="left:294px;top:447px;" width="12" height="10" viewBox="0 0 12 10"><rect x="0.55" y="0.55" width="10.9" height="3.3" rx="1.65" stroke="#5d6a85" stroke-width="1.1" fill="none"/><path d="M2.4 3.9V6.5Q2.4 7.9 3.7 7.9H5.3" stroke="#5d6a85" stroke-width="1.1" fill="none"/><rect x="5.3" y="6.3" width="6.15" height="3.2" rx="1.6" stroke="#5d6a85" stroke-width="1.1" fill="none"/></svg>
<div class="a" id="tree9" style="left:316px;top:445.30px;font-size:12.5px;line-height:16px;color:#1e252f;font-weight:normal;letter-spacing:-0.650px;">STATE</div>
<svg style="left:260.5px;top:477px;" width="6" height="9" viewBox="0 0 6 9"><path d="M0.8 0.8L4.5 4.5L0.8 8.2" stroke="#7f8aa1" stroke-width="1.2" fill="none"/></svg>
<svg style="left:275px;top:475px;" width="10" height="13" viewBox="0 0 10 13"><ellipse cx="5" cy="2.6" rx="4.4" ry="2" stroke="#5d6a85" stroke-width="1.1" fill="none"/><path d="M0.6 2.6V10.2A4.4 2 0 0 0 9.4 10.2V2.6" stroke="#5d6a85" stroke-width="1.1" fill="none"/></svg>
<div class="a" id="tree10" style="left:296px;top:475.30px;font-size:12.5px;line-height:16px;color:#1e252f;font-weight:normal;letter-spacing:-0.671px;">PNEUMETRA_DB</div>
<svg style="left:260.5px;top:507px;" width="6" height="9" viewBox="0 0 6 9"><path d="M0.8 0.8L4.5 4.5L0.8 8.2" stroke="#7f8aa1" stroke-width="1.2" fill="none"/></svg>
<svg style="left:273px;top:506px;" width="14" height="13" viewBox="0 0 14 13"><path d="M5.03 10.62L8.43 3.02A2.0 2.0 0 0 0 4.77 1.38L1.37 8.98A2.0 2.0 0 0 0 5.03 10.62Z" stroke="#5d6a85" stroke-width="1.1" fill="none"/><path d="M5.78 4.14L8.78 10.64A2.0 2.0 0 0 0 12.42 8.96L9.42 2.46A2.0 2.0 0 0 0 5.78 4.14Z" stroke="#5d6a85" stroke-width="1.1" fill="none"/></svg>
<div class="a" id="tree11" style="left:296px;top:505.30px;font-size:12.5px;line-height:16px;color:#1e252f;font-weight:normal;letter-spacing:-0.625px;">SNOWFLAKE</div>
<svg style="left:260.5px;top:537px;" width="6" height="9" viewBox="0 0 6 9"><path d="M0.8 0.8L4.5 4.5L0.8 8.2" stroke="#7f8aa1" stroke-width="1.2" fill="none"/></svg>
<svg style="left:275px;top:535px;" width="10" height="13" viewBox="0 0 10 13"><ellipse cx="5" cy="2.6" rx="4.4" ry="2" stroke="#5d6a85" stroke-width="1.1" fill="none"/><path d="M0.6 2.6V10.2A4.4 2 0 0 0 9.4 10.2V2.6" stroke="#5d6a85" stroke-width="1.1" fill="none"/></svg>
<div class="a" id="tree12" style="left:296px;top:535.30px;font-size:12.5px;line-height:16px;color:#1e252f;font-weight:normal;letter-spacing:-0.529px;">WEATHER_STATISTICS</div>
<div class="a" style="left:716px;top:145px;width:32px;height:32px;background:#dfe3ea;border-radius:6px;"></div>
<svg style="left:726px;top:154px;" width="12" height="14" viewBox="0 0 12 14"><ellipse cx="6" cy="3" rx="4.8" ry="2.1" stroke="#5d6a85" stroke-width="1.1" fill="none"/><path d="M1.2 3V11A4.8 2.1 0 0 0 10.8 11V3" stroke="#5d6a85" stroke-width="1.1" fill="none"/></svg>
<div class="a" id="title1" style="left:764.5px;top:148.50px;font-size:21px;line-height:24px;color:#5d6a85;font-weight:bold;letter-spacing:-0.838px;">PGSQL_GCP / JOURNALS /</div>
<div class="a" id="title2" style="left:1028.2px;top:148.50px;font-size:21px;line-height:24px;color:#1e252f;font-weight:bold;letter-spacing:-0.128px;">PSQLDS1_pneumetra_schema_weather_1742926983539</div>
<div class="a" style="left:1721px;top:145px;width:42px;height:32px;border-radius:6px;border:1px solid #dde1e8;background:#fbfbfc"></div>
<svg style="left:1735px;top:159px;" width="14" height="4" viewBox="0 0 14 4"><circle cx="2" cy="2" r="1.4" fill="#1e252f"/><circle cx="7" cy="2" r="1.4" fill="#1e252f"/><circle cx="12" cy="2" r="1.4" fill="#1e252f"/></svg>
<div class="a" style="left:1771px;top:145px;width:94px;height:32px;background:#1a6ce7;border-radius:6px;"></div>
<div class="a" id="load" style="left:1784px;top:152.00px;font-size:14px;line-height:18px;color:#fff;font-weight:bold;letter-spacing:0.079px;">Load Data</div>
<div class="a" style="left:716px;top:201px;width:389px;height:32px;background:#f7f7f8;border-radius:8px;"></div>
<svg style="left:726px;top:211px;" width="13" height="11" viewBox="0 0 13 11"><rect x="0.6" y="0.6" width="11.8" height="9.8" rx="2" stroke="#5d6a85" stroke-width="1.1" fill="none"/><path d="M0.6 3.8H12.4" stroke="#5d6a85" stroke-width="1.1"/></svg>
<svg style="left:789px;top:209px;" width="12" height="15" viewBox="0 0 12 15"><rect x="0.6" y="2" width="10.8" height="12.4" rx="1.5" stroke="#5d6a85" stroke-width="1.1" fill="none"/><path d="M6 0.3V2" stroke="#5d6a85" stroke-width="1.2"/><circle cx="6" cy="6.8" r="1.6" fill="#5d6a85"/><path d="M2.8 12A3.2 3 0 0 1 9.2 12Z" fill="#5d6a85"/></svg>
<svg style="left:890px;top:210px;" width="14" height="14" viewBox="0 0 14 14"><circle cx="7" cy="7" r="6.3" stroke="#5d6a85" stroke-width="1.1" fill="none"/><path d="M7 3.5V7.3L9.5 8.3" stroke="#5d6a85" stroke-width="1.1" fill="none"/></svg>
<svg style="left:976px;top:212px;" width="13" height="10" viewBox="0 0 13 10"><path d="M0.5 1H12.5M0.5 5H10M0.5 9H7" stroke="#5d6a85" stroke-width="1.6"/></svg>
<svg style="left:1033px;top:211px;" width="12" height="12" viewBox="0 0 12 12"><rect x="0.6" y="0.6" width="10.8" height="10.8" rx="2" stroke="#5d6a85" stroke-width="1.1" fill="none"/><path d="M0.6 6H11.4M2.5 3.3H3.5M2.5 8.7H3.5" stroke="#5d6a85" stroke-width="1.1"/></svg>
<div class="a" id="meta744" style="left:744.5px;top:208.70px;font-size:12.5px;line-height:16px;color:#5d6a85;font-weight:normal;letter-spacing:0.000px;">Table</div>
<div class="a" id="meta807" style="left:807px;top:208.70px;font-size:12.5px;line-height:16px;color:#5d6a85;font-weight:normal;letter-spacing:-0.721px;">PGSQL_GCP</div>
<div class="a" id="meta909" style="left:909.5px;top:208.70px;font-size:12.5px;line-height:16px;color:#5d6a85;font-weight:normal;letter-spacing:-0.079px;">1 day ago</div>
<div class="a" id="meta995" style="left:995.5px;top:208.70px;font-size:12.5px;line-height:16px;color:#5d6a85;font-weight:normal;letter-spacing:-0.868px;">1.2K</div>
<div class="a" id="meta1051" style="left:1051px;top:208.70px;font-size:12.5px;line-height:16px;color:#5d6a85;font-weight:normal;letter-spacing:0.200px;">90.5KB</div>
<div class="a" id="tab716" style="left:716.5px;top:254.50px;font-size:12.5px;line-height:16px;color:#5d6a85;font-weight:bold;letter-spacing:-0.250px;">Table Details</div>
<div class="a" id="tab815" style="left:815px;top:254.50px;font-size:12.5px;line-height:16px;color:#1a5fd8;font-weight:bold;letter-spacing:-0.500px;">Columns</div>
<div class="a" id="tab890" style="left:890px;top:254.50px;font-size:12.5px;line-height:16px;color:#5d6a85;font-weight:bold;letter-spacing:-0.182px;">Data Preview</div>
<div class="a" id="tab990" style="left:990px;top:254.50px;font-size:12.5px;line-height:16px;color:#5d6a85;font-weight:bold;letter-spacing:-0.182px;">Copy History</div>
<div class="a" style="left:716px;top:281px;width:1149px;height:1px;background:#dde1ea;border-radius:0px;"></div>
<div class="a" style="left:815px;top:280px;width:51px;height:2px;background:#1a6ce7;border-radius:0px;"></div>
<div class="a" id="cols" style="left:716px;top:309.50px;font-size:16.5px;line-height:20px;color:#1e252f;font-weight:bold;letter-spacing:0.042px;">49 Columns</div>
<div class="a" style="left:1745px;top:307px;width:86px;height:24px;border-radius:6px;border:1px solid #dde1e8;background:#fff"></div>
<svg style="left:1760px;top:313px;" width="12" height="12" viewBox="0 0 12 12"><circle cx="4.8" cy="4.8" r="4" stroke="#5d6a85" stroke-width="1.1" fill="none"/><path d="M7.8 7.8L11.3 11.3" stroke="#5d6a85" stroke-width="1.1"/></svg>
<div class="a" id="sbtn" style="left:1778px;top:311.00px;font-size:13px;line-height:16px;color:#1e252f;font-weight:normal;letter-spacing:-0.280px;">Search</div>
<div class="a" style="left:1839px;top:307px;width:26px;height:24px;border-radius:6px;border:1px solid #dde1e8;background:#fff"></div>
<svg style="left:1846px;top:313px;" width="13" height="13" viewBox="0 0 13 13"><path d="M11.3 6.5A4.8 4.8 0 1 1 9.8 3" stroke="#1e252f" stroke-width="1.1" fill="none"/><path d="M11.5 0.9V4.1H8.3Z" fill="#1e252f"/></svg>
<div class="a" id="hd716" style="left:716.5px;top:347.50px;font-size:12px;line-height:14px;color:#1a6ce7;font-weight:bold;letter-spacing:0.465px;">NAME</div>
<div class="a" id="hd1029" style="left:1029px;top:347.50px;font-size:12px;line-height:14px;color:#5d6a85;font-weight:bold;letter-spacing:0.332px;">TYPE</div>
<div class="a" id="hd1199" style="left:1199.5px;top:347.50px;font-size:12px;line-height:14px;color:#5d6a85;font-weight:bold;letter-spacing:0.560px;">DESCRIPTION</div>
<div class="a" id="hd1545" style="left:1545.5px;top:347.50px;font-size:12px;line-height:14px;color:#5d6a85;font-weight:bold;letter-spacing:0.344px;">NULLABLE</div>
<div class="a" id="hd1711" style="left:1711px;top:347.50px;font-size:12px;line-height:14px;color:#5d6a85;font-weight:bold;letter-spacing:0.233px;">DEFAULT</div>
<svg style="left:760px;top:348px;" width="12" height="13" viewBox="0 0 12 13"><path d="M6 12V1.5M1.5 6L6 1.5L10.5 6" stroke="#1a6ce7" stroke-width="1.7" fill="none"/></svg>
<svg style="left:1300px;top:348px;" width="13" height="13" viewBox="0 0 13 13"><circle cx="6.5" cy="6.5" r="5.8" stroke="#5d6a85" stroke-width="1.1" fill="none"/><path d="M6.5 5.5V9.5" stroke="#5d6a85" stroke-width="1.2"/><circle cx="6.5" cy="3.7" r="0.75" fill="#5d6a85"/></svg>
<div class="a" style="left:716px;top:371px;width:1134px;height:1px;background:#dde1ea;border-radius:0px;"></div>
<svg style="left:721px;top:386px;" width="7" height="13" viewBox="0 0 7 13"><rect x="0.55" y="0.55" width="5.9" height="11.9" rx="1.8" stroke="#5d6a85" stroke-width="1.1" fill="none"/><path d="M0.6 4.5H6.4M0.6 8.5H6.4" stroke="#5d6a85" stroke-width="1.1"/></svg>
<div class="a" id="rn0" style="left:744px;top:384.50px;font-size:12px;line-height:16px;color:#1e252f;font-weight:bold;letter-spacing:-0.314px;">EVENT_TYPE</div>
<svg style="left:1030px;top:385px;" width="11" height="13" viewBox="0 0 11 13"><path d="M2 8.5L5.5 1L9 8.5M3.2 6H7.8M1 11.8H10" stroke="#5d6a85" stroke-width="1.1" fill="none"/></svg>
<div class="a" id="ty0" style="left:1048.5px;top:384.50px;font-size:12.5px;line-height:16px;color:#3b4557;font-weight:normal;letter-spacing:-0.167px;">Varchar</div>
<div class="a" style="left:1199px;top:390px;width:13px;height:1px;background:#8a93a6;border-radius:0px;"></div>
<div class="a" id="nl0" style="left:1545.5px;top:384.50px;font-size:12.5px;line-height:16px;color:#1e252f;font-weight:normal;letter-spacing:0.400px;">No</div>
<div class="a" id="nu0" style="left:1711px;top:384.50px;font-size:12.5px;line-height:16px;color:#1e252f;font-weight:normal;letter-spacing:-0.535px;">NULL</div>
<div class="a" style="left:716px;top:412px;width:1134px;height:1px;background:#dde1ea;border-radius:0px;"></div>
<svg style="left:721px;top:427px;" width="7" height="13" viewBox="0 0 7 13"><rect x="0.55" y="0.55" width="5.9" height="11.9" rx="1.8" stroke="#5d6a85" stroke-width="1.1" fill="none"/><path d="M0.6 4.5H6.4M0.6 8.5H6.4" stroke="#5d6a85" stroke-width="1.1"/></svg>
<div class="a" id="rn1" style="left:744px;top:425.50px;font-size:12px;line-height:16px;color:#1e252f;font-weight:bold;letter-spacing:-0.168px;">LEAST_SIGNIFICANT_POSITION</div>
<svg style="left:1029px;top:427px;" width="13" height="13" viewBox="0 0 13 13"><path d="M4.3 0.5V12.5M8.7 0.5V12.5M0.5 4.3H12.5M0.5 8.7H12.5" stroke="#5d6a85" stroke-width="1.2" fill="none"/></svg>
<div class="a" id="ty1" style="left:1048.5px;top:425.50px;font-size:12.5px;line-height:16px;color:#3b4557;font-weight:normal;letter-spacing:0.040px;">Number</div>
<div class="a" style="left:1199px;top:431px;width:13px;height:1px;background:#8a93a6;border-radius:0px;"></div>
<div class="a" id="nl1" style="left:1545.5px;top:425.50px;font-size:12.5px;line-height:16px;color:#1e252f;font-weight:normal;letter-spacing:0.100px;">Yes</div>
<div class="a" id="nu1" style="left:1711px;top:425.50px;font-size:12.5px;line-height:16px;color:#1e252f;font-weight:normal;letter-spacing:-0.535px;">NULL</div>
<div class="a" style="left:716px;top:453px;width:1134px;height:1px;background:#dde1ea;border-radius:0px;"></div>
<svg style="left:721px;top:468px;" width="7" height="13" viewBox="0 0 7 13"><rect x="0.55" y="0.55" width="5.9" height="11.9" rx="1.8" stroke="#5d6a85" stroke-width="1.1" fill="none"/><path d="M0.6 4.5H6.4M0.6 8.5H6.4" stroke="#5d6a85" stroke-width="1.1"/></svg>
<div class="a" id="rn2" style="left:744px;top:466.50px;font-size:12px;line-height:16px;color:#1e252f;font-weight:bold;letter-spacing:-0.083px;">MOST_SIGNIFICANT_POSITION</div>
<svg style="left:1029px;top:468px;" width="13" height="13" viewBox="0 0 13 13"><path d="M4.3 0.5V12.5M8.7 0.5V12.5M0.5 4.3H12.5M0.5 8.7H12.5" stroke="#5d6a85" stroke-width="1.2" fill="none"/></svg>
<div class="a" id="ty2" style="left:1048.5px;top:466.50px;font-size:12.5px;line-height:16px;color:#3b4557;font-weight:normal;letter-spacing:0.040px;">Number</div>
<div class="a" style="left:1199px;top:472px;width:13px;height:1px;background:#8a93a6;border-radius:0px;"></div>
<div class="a" id="nl2" style="left:1545.5px;top:466.50px;font-size:12.5px;line-height:16px;color:#1e252f;font-weight:normal;letter-spacing:0.100px;">Yes</div>
<div class="a" id="nu2" style="left:1711px;top:466.50px;font-size:12.5px;line-height:16px;color:#1e252f;font-weight:normal;letter-spacing:-0.535px;">NULL</div>
<div class="a" style="left:716px;top:494px;width:1134px;height:1px;background:#dde1ea;border-radius:0px;"></div>
<svg style="left:721px;top:509px;" width="7" height="13" viewBox="0 0 7 13"><rect x="0.55" y="0.55" width="5.9" height="11.9" rx="1.8" stroke="#5d6a85" stroke-width="1.1" fill="none"/><path d="M0.6 4.5H6.4M0.6 8.5H6.4" stroke="#5d6a85" stroke-width="1.1"/></svg>
<div class="a" id="rn3" style="left:744px;top:507.50px;font-size:12px;line-height:16px;color:#1e252f;font-weight:bold;letter-spacing:-0.317px;">PAYLOAD__AEROSOL_OPTICAL_DEPTH</div>
<svg style="left:1029px;top:509px;" width="13" height="13" viewBox="0 0 13 13"><path d="M4.3 0.5V12.5M8.7 0.5V12.5M0.5 4.3H12.5M0.5 8.7H12.5" stroke="#5d6a85" stroke-width="1.2" fill="none"/></svg>
<div class="a" id="ty3" style="left:1048.5px;top:507.50px;font-size:12.5px;line-height:16px;color:#3b4557;font-weight:normal;letter-spacing:-0.100px;">Float</div>
<div class="a" style="left:1199px;top:513px;width:13px;height:1px;background:#8a93a6;border-radius:0px;"></div>
<div class="a" id="nl3" style="left:1545.5px;top:507.50px;font-size:12.5px;line-height:16px;color:#1e252f;font-weight:normal;letter-spacing:0.100px;">Yes</div>
<div class="a" id="nu3" style="left:1711px;top:507.50px;font-size:12.5px;line-height:16px;color:#1e252f;font-weight:normal;letter-spacing:-0.535px;">NULL</div>
<div class="a" style="left:716px;top:535px;width:1134px;height:1px;background:#dde1ea;border-radius:0px;"></div>
<svg style="left:721px;top:550px;" width="7" height="13" viewBox="0 0 7 13"><rect x="0.55" y="0.55" width="5.9" height="11.9" rx="1.8" stroke="#5d6a85" stroke-width="1.1" fill="none"/><path d="M0.6 4.5H6.4M0.6 8.5H6.4" stroke="#5d6a85" stroke-width="1.1"/></svg>
<div class="a" id="rn4" style="left:744px;top:548.50px;font-size:12px;line-height:16px;color:#1e252f;font-weight:bold;letter-spacing:-0.174px;">PAYLOAD__AMMONIA</div>
<svg style="left:1029px;top:550px;" width="13" height="13" viewBox="0 0 13 13"><path d="M4.3 0.5V12.5M8.7 0.5V12.5M0.5 4.3H12.5M0.5 8.7H12.5" stroke="#5d6a85" stroke-width="1.2" fill="none"/></svg>
<div class="a" id="ty4" style="left:1048.5px;top:548.50px;font-size:12.5px;line-height:16px;color:#3b4557;font-weight:normal;letter-spacing:-0.100px;">Float</div>
<div class="a" style="left:1199px;top:554px;width:13px;height:1px;background:#8a93a6;border-radius:0px;"></div>
<div class="a" id="nl4" style="left:1545.5px;top:548.50px;font-size:12.5px;line-height:16px;color:#1e252f;font-weight:normal;letter-spacing:0.100px;">Yes</div>
<div class="a" id="nu4" style="left:1711px;top:548.50px;font-size:12.5px;line-height:16px;color:#1e252f;font-weight:normal;letter-spacing:-0.535px;">NULL</div>
<div class="a" style="left:716px;top:576px;width:1134px;height:1px;background:#dde1ea;border-radius:0px;"></div>
<svg style="left:721px;top:591px;" width="7" height="13" viewBox="0 0 7 13"><rect x="0.55" y="0.55" width="5.9" height="11.9" rx="1.8" stroke="#5d6a85" stroke-width="1.1" fill="none"/><path d="M0.6 4.5H6.4M0.6 8.5H6.4" stroke="#5d6a85" stroke-width="1.1"/></svg>
<div class="a" id="rn5" style="left:744px;top:589.50px;font-size:12px;line-height:16px;color:#1e252f;font-weight:bold;letter-spacing:-0.377px;">PAYLOAD__APPARENT_TEMPERATURE</div>
<svg style="left:1029px;top:591px;" width="13" height="13" viewBox="0 0 13 13"><path d="M4.3 0.5V12.5M8.7 0.5V12.5M0.5 4.3H12.5M0.5 8.7H12.5" stroke="#5d6a85" stroke-width="1.2" fill="none"/></svg>
<div class="a" id="ty5" style="left:1048.5px;top:589.50px;font-size:12.5px;line-height:16px;color:#3b4557;font-weight:normal;letter-spacing:-0.100px;">Float</div>
<div class="a" style="left:1199px;top:595px;width:13px;height:1px;background:#8a93a6;border-radius:0px;"></div>
<div class="a" id="nl5" style="left:1545.5px;top:589.50px;font-size:12.5px;line-height:16px;color:#1e252f;font-weight:normal;letter-spacing:0.100px;">Yes</div>
<div class="a" id="nu5" style="left:1711px;top:589.50px;font-size:12.5px;line-height:16px;color:#1e252f;font-weight:normal;letter-spacing:-0.535px;">NULL</div>
<div class="a" style="left:716px;top:617px;width:1134px;height:1px;background:#dde1ea;border-radius:0px;"></div>
<svg style="left:721px;top:632px;" width="7" height="13" viewBox="0 0 7 13"><rect x="0.55" y="0.55" width="5.9" height="11.9" rx="1.8" stroke="#5d6a85" stroke-width="1.1" fill="none"/><path d="M0.6 4.5H6.4M0.6 8.5H6.4" stroke="#5d6a85" stroke-width="1.1"/></svg>
<div class="a" id="rn6" style="left:744px;top:630.50px;font-size:12px;line-height:16px;color:#1e252f;font-weight:bold;letter-spacing:-0.364px;">PAYLOAD__CARBON_DIOXIDE</div>
<svg style="left:1029px;top:632px;" width="13" height="13" viewBox="0 0 13 13"><path d="M4.3 0.5V12.5M8.7 0.5V12.5M0.5 4.3H12.5M0.5 8.7H12.5" stroke="#5d6a85" stroke-width="1.2" fill="none"/></svg>
<div class="a" id="ty6" style="left:1048.5px;top:630.50px;font-size:12.5px;line-height:16px;color:#3b4557;font-weight:normal;letter-spacing:-0.100px;">Float</div>
<div class="a" style="left:1199px;top:636px;width:13px;height:1px;background:#8a93a6;border-radius:0px;"></div>
<div class="a" id="nl6" style="left:1545.5px;top:630.50px;font-size:12.5px;line-height:16px;color:#1e252f;font-weight:normal;letter-spacing:0.100px;">Yes</div>
<div class="a" id="nu6" style="left:1711px;top:630.50px;font-size:12.5px;line-height:16px;color:#1e252f;font-weight:normal;letter-spacing:-0.535px;">NULL</div>
<div class="a" style="left:716px;top:658px;width:1134px;height:1px;background:#dde1ea;border-radius:0px;"></div>
<svg style="left:721px;top:673px;" width="7" height="13" viewBox="0 0 7 13"><rect x="0.55" y="0.55" width="5.9" height="11.9" rx="1.8" stroke="#5d6a85" stroke-width="1.1" fill="none"/><path d="M0.6 4.5H6.4M0.6 8.5H6.4" stroke="#5d6a85" stroke-width="1.1"/></svg>
<div class="a" id="rn7" style="left:744px;top:671.50px;font-size:12px;line-height:16px;color:#1e252f;font-weight:bold;letter-spacing:-0.277px;">PAYLOAD__CARBON_MONOXIDE</div>
<svg style="left:1029px;top:673px;" width="13" height="13" viewBox="0 0 13 13"><path d="M4.3 0.5V12.5M8.7 0.5V12.5M0.5 4.3H12.5M0.5 8.7H12.5" stroke="#5d6a85" stroke-width="1.2" fill="none"/></svg>
<div class="a" id="ty7" style="left:1048.5px;top:671.50px;font-size:12.5px;line-height:16px;color:#3b4557;font-weight:normal;letter-spacing:-0.100px;">Float</div>
<div class="a" style="left:1199px;top:677px;width:13px;height:1px;background:#8a93a6;border-radius:0px;"></div>
<div class="a" id="nl7" style="left:1545.5px;top:671.50px;font-size:12.5px;line-height:16px;color:#1e252f;font-weight:normal;letter-spacing:0.100px;">Yes</div>
<div class="a" id="nu7" style="left:1711px;top:671.50px;font-size:12.5px;line-height:16px;color:#1e252f;font-weight:normal;letter-spacing:-0.535px;">NULL</div>
<div class="a" style="left:716px;top:699px;width:1134px;height:1px;background:#dde1ea;border-radius:0px;"></div>
<svg style="left:721px;top:714px;" width="7" height="13" viewBox="0 0 7 13"><rect x="0.55" y="0.55" width="5.9" height="11.9" rx="1.8" stroke="#5d6a85" stroke-width="1.1" fill="none"/><path d="M0.6 4.5H6.4M0.6 8.5H6.4" stroke="#5d6a85" stroke-width="1.1"/></svg>
<div class="a" id="rn8" style="left:744px;top:712.50px;font-size:12px;line-height:16px;color:#1e252f;font-weight:bold;letter-spacing:-0.284px;">PAYLOAD__CITY</div>
<svg style="left:1030px;top:713px;" width="11" height="13" viewBox="0 0 11 13"><path d="M2 8.5L5.5 1L9 8.5M3.2 6H7.8M1 11.8H10" stroke="#5d6a85" stroke-width="1.1" fill="none"/></svg>
<div class="a" id="ty8" style="left:1048.5px;top:712.50px;font-size:12.5px;line-height:16px;color:#3b4557;font-weight:normal;letter-spacing:-0.167px;">Varchar</div>
<div class="a" style="left:1199px;top:718px;width:13px;height:1px;background:#8a93a6;border-radius:0px;"></div>
<div class="a" id="nl8" style="left:1545.5px;top:712.50px;font-size:12.5px;line-height:16px;color:#1e252f;font-weight:normal;letter-spacing:0.100px;">Yes</div>
<div class="a" id="nu8" style="left:1711px;top:712.50px;font-size:12.5px;line-height:16px;color:#1e252f;font-weight:normal;letter-spacing:-0.535px;">NULL</div>
<div class="a" style="left:716px;top:740px;width:1134px;height:1px;background:#dde1ea;border-radius:0px;"></div>
<svg style="left:721px;top:755px;" width="7" height="13" viewBox="0 0 7 13"><rect x="0.55" y="0.55" width="5.9" height="11.9" rx="1.8" stroke="#5d6a85" stroke-width="1.1" fill="none"/><path d="M0.6 4.5H6.4M0.6 8.5H6.4" stroke="#5d6a85" stroke-width="1.1"/></svg>
<div class="a" id="rn9" style="left:744px;top:753.50px;font-size:12px;line-height:16px;color:#1e252f;font-weight:bold;letter-spacing:-0.443px;">PAYLOAD__CLOUD_COVER</div>
<svg style="left:1029px;top:755px;" width="13" height="13" viewBox="0 0 13 13"><path d="M4.3 0.5V12.5M8.7 0.5V12.5M0.5 4.3H12.5M0.5 8.7H12.5" stroke="#5d6a85" stroke-width="1.2" fill="none"/></svg>
<div class="a" id="ty9" style="left:1048.5px;top:753.50px;font-size:12.5px;line-height:16px;color:#3b4557;font-weight:normal;letter-spacing:-0.100px;">Float</div>
<div class="a" style="left:1199px;top:759px;width:13px;height:1px;background:#8a93a6;border-radius:0px;"></div>
<div class="a" id="nl9" style="left:1545.5px;top:753.50px;font-size:12.5px;line-height:16px;color:#1e252f;font-weight:normal;letter-spacing:0.100px;">Yes</div>
<div class="a" id="nu9" style="left:1711px;top:753.50px;font-size:12.5px;line-height:16px;color:#1e252f;font-weight:normal;letter-spacing:-0.535px;">NULL</div>
<div class="a" style="left:716px;top:781px;width:1134px;height:1px;background:#dde1ea;border-radius:0px;"></div>
<svg style="left:721px;top:796px;" width="7" height="13" viewBox="0 0 7 13"><rect x="0.55" y="0.55" width="5.9" height="11.9" rx="1.8" stroke="#5d6a85" stroke-width="1.1" fill="none"/><path d="M0.6 4.5H6.4M0.6 8.5H6.4" stroke="#5d6a85" stroke-width="1.1"/></svg>
<div class="a" id="rn10" style="left:744px;top:794.50px;font-size:12px;line-height:16px;color:#1e252f;font-weight:bold;letter-spacing:-0.375px;">PAYLOAD__CLOUD_COVER_HIGH</div>
<svg style="left:1029px;top:796px;" width="13" height="13" viewBox="0 0 13 13"><path d="M4.3 0.5V12.5M8.7 0.5V12.5M0.5 4.3H12.5M0.5 8.7H12.5" stroke="#5d6a85" stroke-width="1.2" fill="none"/></svg>
<div class="a" id="ty10" style="left:1048.5px;top:794.50px;font-size:12.5px;line-height:16px;color:#3b4557;font-weight:normal;letter-spacing:-0.100px;">Float</div>
<div class="a" style="left:1199px;top:800px;width:13px;height:1px;background:#8a93a6;border-radius:0px;"></div>
<div class="a" id="nl10" style="left:1545.5px;top:794.50px;font-size:12.5px;line-height:16px;color:#1e252f;font-weight:normal;letter-spacing:0.100px;">Yes</div>
<div class="a" id="nu10" style="left:1711px;top:794.50px;font-size:12.5px;line-height:16px;color:#1e252f;font-weight:normal;letter-spacing:-0.535px;">NULL</div>
<div class="a" style="left:716px;top:822px;width:1134px;height:1px;background:#dde1ea;border-radius:0px;"></div>
<svg style="left:721px;top:837px;" width="7" height="13" viewBox="0 0 7 13"><rect x="0.55" y="0.55" width="5.9" height="11.9" rx="1.8" stroke="#5d6a85" stroke-width="1.1" fill="none"/><path d="M0.6 4.5H6.4M0.6 8.5H6.4" stroke="#5d6a85" stroke-width="1.1"/></svg>
<div class="a" id="rn11" style="left:744px;top:835.50px;font-size:12px;line-height:16px;color:#1e252f;font-weight:bold;letter-spacing:-0.435px;">PAYLOAD__CLOUD_COVER_LOW</div>
<svg style="left:1029px;top:837px;" width="13" height="13" viewBox="0 0 13 13"><path d="M4.3 0.5V12.5M8.7 0.5V12.5M0.5 4.3H12.5M0.5 8.7H12.5" stroke="#5d6a85" stroke-width="1.2" fill="none"/></svg>
<div class="a" id="ty11" style="left:1048.5px;top:835.50px;font-size:12.5px;line-height:16px;color:#3b4557;font-weight:normal;letter-spacing:-0.100px;">Float</div>
<div class="a" style="left:1199px;top:841px;width:13px;height:1px;background:#8a93a6;border-radius:0px;"></div>
<div class="a" id="nl11" style="left:1545.5px;top:835.50px;font-size:12.5px;line-height:16px;color:#1e252f;font-weight:normal;letter-spacing:0.100px;">Yes</div>
<div class="a" id="nu11" style="left:1711px;top:835.50px;font-size:12.5px;line-height:16px;color:#1e252f;font-weight:normal;letter-spacing:-0.535px;">NULL</div>
<div class="a" style="left:716px;top:863px;width:1134px;height:1px;background:#dde1ea;border-radius:0px;"></div>
<svg style="left:721px;top:878px;" width="7" height="13" viewBox="0 0 7 13"><rect x="0.55" y="0.55" width="5.9" height="11.9" rx="1.8" stroke="#5d6a85" stroke-width="1.1" fill="none"/><path d="M0.6 4.5H6.4M0.6 8.5H6.4" stroke="#5d6a85" stroke-width="1.1"/></svg>
<div class="a" id="rn12" style="left:744px;top:876.50px;font-size:12px;line-height:16px;color:#1e252f;font-weight:bold;letter-spacing:-0.391px;">PAYLOAD__CLOUD_COVER_MID</div>
<svg style="left:1029px;top:878px;" width="13" height="13" viewBox="0 0 13 13"><path d="M4.3 0.5V12.5M8.7 0.5V12.5M0.5 4.3H12.5M0.5 8.7H12.5" stroke="#5d6a85" stroke-width="1.2" fill="none"/></svg>
<div class="a" id="ty12" style="left:1048.5px;top:876.50px;font-size:12.5px;line-height:16px;color:#3b4557;font-weight:normal;letter-spacing:-0.100px;">Float</div>
<div class="a" style="left:1199px;top:882px;width:13px;height:1px;background:#8a93a6;border-radius:0px;"></div>
<div class="a" id="nl12" style="left:1545.5px;top:876.50px;font-size:12.5px;line-height:16px;color:#1e252f;font-weight:normal;letter-spacing:0.100px;">Yes</div>
<div class="a" id="nu12" style="left:1711px;top:876.50px;font-size:12.5px;line-height:16px;color:#1e252f;font-weight:normal;letter-spacing:-0.535px;">NULL</div>
<div class="a" style="left:716px;top:904px;width:1134px;height:1px;background:#dde1ea;border-radius:0px;"></div>
<svg style="left:721px;top:919px;" width="7" height="13" viewBox="0 0 7 13"><rect x="0.55" y="0.55" width="5.9" height="11.9" rx="1.8" stroke="#5d6a85" stroke-width="1.1" fill="none"/><path d="M0.6 4.5H6.4M0.6 8.5H6.4" stroke="#5d6a85" stroke-width="1.1"/></svg>
<div class="a" id="rn13" style="left:744px;top:917.50px;font-size:12px;line-height:16px;color:#1e252f;font-weight:bold;letter-spacing:-0.312px;">PAYLOAD__DATETIME</div>
<svg style="left:1029px;top:918px;" width="14" height="14" viewBox="0 0 14 14"><circle cx="7" cy="7" r="6.3" stroke="#5d6a85" stroke-width="1.1" fill="none"/><path d="M7 3.5V7.3L9.5 8.3" stroke="#5d6a85" stroke-width="1.1" fill="none"/></svg>
<div class="a" id="ty13" style="left:1048.5px;top:917.50px;font-size:12.5px;line-height:16px;color:#3b4557;font-weight:normal;letter-spacing:-0.167px;">Timestamp_NTZ</div>
<div class="a" style="left:1199px;top:923px;width:13px;height:1px;background:#8a93a6;border-radius:0px;"></div>
<div class="a" id="nl13" style="left:1545.5px;top:917.50px;font-size:12.5px;line-height:16px;color:#1e252f;font-weight:normal;letter-spacing:0.100px;">Yes</div>
<div class="a" id="nu13" style="left:1711px;top:917.50px;font-size:12.5px;line-height:16px;color:#1e252f;font-weight:normal;letter-spacing:-0.535px;">NULL</div>
<div class="a" style="left:716px;top:945px;width:1134px;height:1px;background:#dde1ea;border-radius:0px;"></div>
<svg style="left:721px;top:960px;" width="7" height="13" viewBox="0 0 7 13"><rect x="0.55" y="0.55" width="5.9" height="11.9" rx="1.8" stroke="#5d6a85" stroke-width="1.1" fill="none"/><path d="M0.6 4.5H6.4M0.6 8.5H6.4" stroke="#5d6a85" stroke-width="1.1"/></svg>
<div class="a" id="rn14" style="left:744px;top:958.50px;font-size:12px;line-height:16px;color:#1e252f;font-weight:bold;letter-spacing:-0.401px;">PAYLOAD__DUST</div>
<svg style="left:1029px;top:960px;" width="13" height="13" viewBox="0 0 13 13"><path d="M4.3 0.5V12.5M8.7 0.5V12.5M0.5 4.3H12.5M0.5 8.7H12.5" stroke="#5d6a85" stroke-width="1.2" fill="none"/></svg>
<div class="a" id="ty14" style="left:1048.5px;top:958.50px;font-size:12.5px;line-height:16px;color:#3b4557;font-weight:normal;letter-spacing:-0.100px;">Float</div>
<div class="a" style="left:1199px;top:964px;width:13px;height:1px;background:#8a93a6;border-radius:0px;"></div>
<div class="a" id="nl14" style="left:1545.5px;top:958.50px;font-size:12.5px;line-height:16px;color:#1e252f;font-weight:normal;letter-spacing:0.100px;">Yes</div>
<div class="a" id="nu14" style="left:1711px;top:958.50px;font-size:12.5px;line-height:16px;color:#1e252f;font-weight:normal;letter-spacing:-0.535px;">NULL</div>
<div class="a" style="left:716px;top:986px;width:1134px;height:1px;background:#dde1ea;border-radius:0px;"></div>
<svg style="left:721px;top:1001px;" width="7" height="13" viewBox="0 0 7 13"><rect x="0.55" y="0.55" width="5.9" height="11.9" rx="1.8" stroke="#5d6a85" stroke-width="1.1" fill="none"/><path d="M0.6 4.5H6.4M0.6 8.5H6.4" stroke="#5d6a85" stroke-width="1.1"/></svg>
<div class="a" id="rn15" style="left:744px;top:999.50px;font-size:12px;line-height:16px;color:#1e252f;font-weight:bold;letter-spacing:-0.262px;">PAYLOAD__ET0_FAO_EVAPOTRANSPIRATI...</div>
<svg style="left:1029px;top:1001px;" width="13" height="13" viewBox="0 0 13 13"><path d="M4.3 0.5V12.5M8.7 0.5V12.5M0.5 4.3H12.5M0.5 8.7H12.5" stroke="#5d6a85" stroke-width="1.2" fill="none"/></svg>
<div class="a" id="ty15" style="left:1048.5px;top:999.50px;font-size:12.5px;line-height:16px;color:#3b4557;font-weight:normal;letter-spacing:-0.100px;">Float</div>
<div class="a" style="left:1199px;top:1005px;width:13px;height:1px;background:#8a93a6;border-radius:0px;"></div>
<div class="a" id="nl15" style="left:1545.5px;top:999.50px;font-size:12.5px;line-height:16px;color:#1e252f;font-weight:normal;letter-spacing:0.100px;">Yes</div>
<div class="a" id="nu15" style="left:1711px;top:999.50px;font-size:12.5px;line-height:16px;color:#1e252f;font-weight:normal;letter-spacing:-0.535px;">NULL</div>
<div class="a" style="left:716px;top:1027px;width:1134px;height:1px;background:#dde1ea;border-radius:0px;"></div>
<div class="a" style="left:1850px;top:343px;width:15px;height:693px;background:#fafafa;border-radius:0px;"></div>
<svg style="left:1852px;top:346px;" width="11" height="6" viewBox="0 0 11 6"><path d="M0.5 5.5L5.5 0.5L10.5 5.5Z" fill="#8a8a8a"/></svg>
<div class="a" style="left:1853px;top:357px;width:9px;height:226px;background:#8a8a8a;border-radius:4.5px;"></div>
<svg style="left:1852px;top:1024px;" width="11" height="6" viewBox="0 0 11 6"><path d="M0.5 0.5L5.5 5.5L10.5 0.5Z" fill="#8a8a8a"/></svg>
<div class="a" style="left:1905px;top:121px;width:15px;height:929px;background:#fafafa;border-radius:0px;"></div>
<svg style="left:1907px;top:126px;" width="11" height="6" viewBox="0 0 11 6"><path d="M0.5 5.5L5.5 0.5L10.5 5.5Z" fill="#8a8a8a"/></svg>
<div class="a" style="left:1908px;top:139px;width:9px;height:882px;background:#8a8a8a;border-radius:4.5px;"></div>
<svg style="left:1907px;top:1038px;" width="11" height="6" viewBox="0 0 11 6"><path d="M0.5 0.5L5.5 5.5L10.5 0.5Z" fill="#8a8a8a"/></svg>
</body></html>
